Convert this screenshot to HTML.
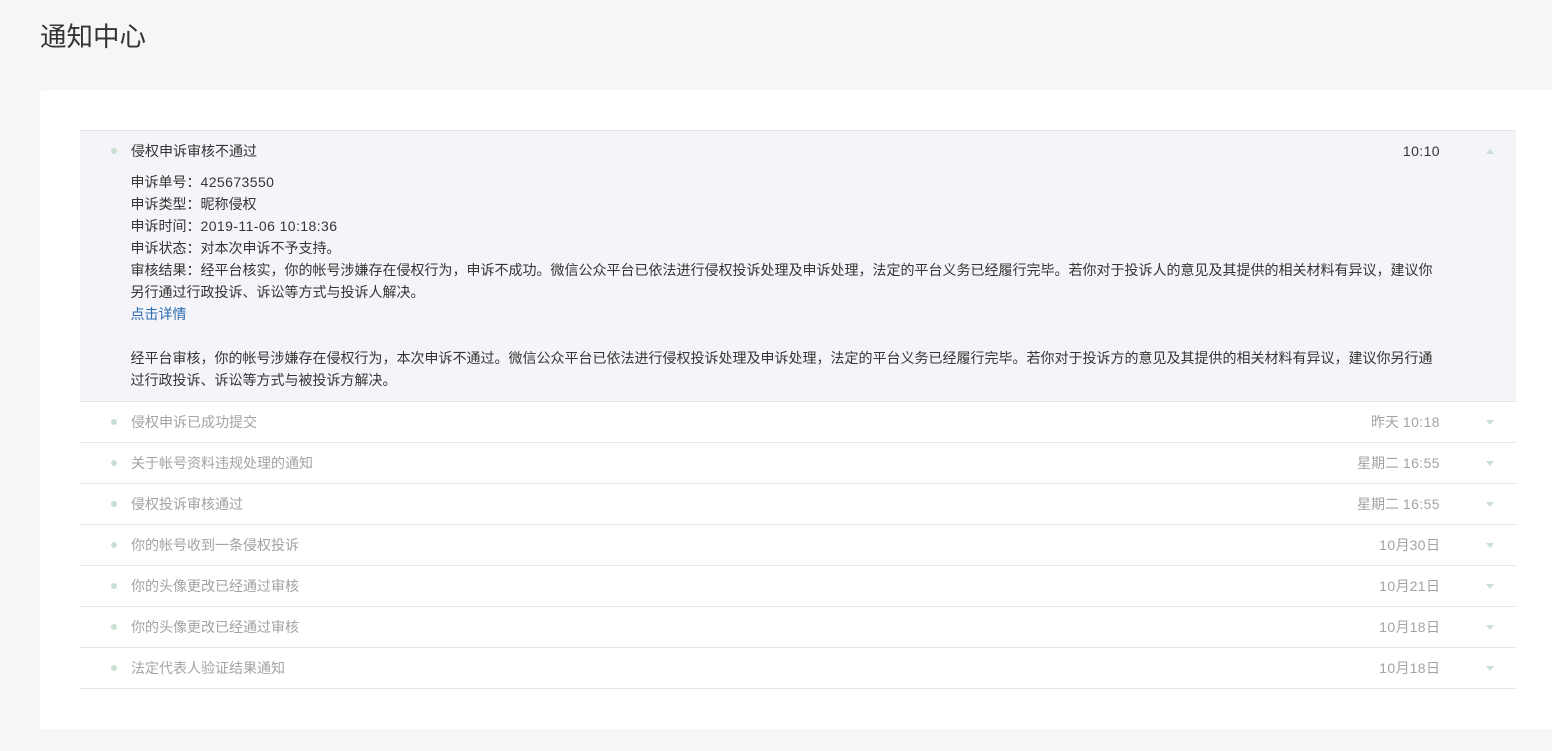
<!DOCTYPE html>
<html lang="zh">
<head>
<meta charset="utf-8">
<style>
html,body{margin:0;padding:0;width:1552px;height:751px;overflow:hidden;background:#f5f6f8;}
body{position:relative;font-family:"Liberation Sans","Noto Sans CJK SC",sans-serif;color:#353535;font-size:14px;}
.t{position:absolute;white-space:nowrap;line-height:22px;}
.d{left:130.5px;}
.h{position:absolute;left:40px;top:18px;font-size:26.5px;line-height:38px;color:#353535;white-space:nowrap;}
.card{position:absolute;left:40px;top:90px;width:1512px;height:639px;background:#fff;border-radius:4px 0 0 4px;}
.open{position:absolute;left:80px;top:130px;width:1436px;height:271px;background:#f4f4f9;}
.line{position:absolute;left:80px;width:1436px;height:1px;background:#e7e7eb;}
.dot{position:absolute;left:111px;width:6px;height:6px;border-radius:50%;background:#c9dfd2;}
.title{left:131px;}
.time{right:112px;text-align:right;}
.g{color:#a3a3a3;}
.num{letter-spacing:.42px;}
.arr{position:absolute;left:1486px;width:0;height:0;border-left:4.5px solid transparent;border-right:4.5px solid transparent;}
.up{border-bottom:5px solid #c9dfd2;}
.dn{border-top:5px solid #c9dfd2;}
a{color:#2a6cb0;text-decoration:none;}
</style>
</head>
<body>
<div class="h">通知中心</div>
<div class="card"></div>
<div class="open"></div>

<div class="line" style="top:130px"></div>
<div class="line" style="top:401px"></div>
<div class="line" style="top:442px"></div>
<div class="line" style="top:483px"></div>
<div class="line" style="top:524px"></div>
<div class="line" style="top:565px"></div>
<div class="line" style="top:606px"></div>
<div class="line" style="top:647px"></div>
<div class="line" style="top:688px"></div>

<div class="dot" style="top:148px"></div>
<div class="t title" style="top:140px">侵权申诉审核不通过</div>
<div class="t time num" style="top:140px">10:10</div>
<div class="arr up" style="top:149px"></div>

<div class="t d" style="top:171px">申诉单号：<span class="num">425673550</span></div>
<div class="t d" style="top:193px">申诉类型：昵称侵权</div>
<div class="t d" style="top:215px">申诉时间：<span class="num">2019-11-06 10:18:36</span></div>
<div class="t d" style="top:237px">申诉状态：对本次申诉不予支持。</div>
<div class="t d" style="top:259px">审核结果：经平台核实，你的帐号涉嫌存在侵权行为，申诉不成功。微信公众平台已依法进行侵权投诉处理及申诉处理，法定的平台义务已经履行完毕。若你对于投诉人的意见及其提供的相关材料有异议，建议你</div>
<div class="t d" style="top:281px">另行通过行政投诉、诉讼等方式与投诉人解决。</div>
<div class="t d" style="top:303px"><a>点击详情</a></div>
<div class="t d" style="top:347px">经平台审核，你的帐号涉嫌存在侵权行为，本次申诉不通过。微信公众平台已依法进行侵权投诉处理及申诉处理，法定的平台义务已经履行完毕。若你对于投诉方的意见及其提供的相关材料有异议，建议你另行通</div>
<div class="t d" style="top:369px">过行政投诉、诉讼等方式与被投诉方解决。</div>

<div class="dot" style="top:419px"></div>
<div class="t title g" style="top:411px">侵权申诉已成功提交</div>
<div class="t time g" style="top:411px">昨天 <span class="num">10:18</span></div>
<div class="arr dn" style="top:420px"></div>

<div class="dot" style="top:460px"></div>
<div class="t title g" style="top:452px">关于帐号资料违规处理的通知</div>
<div class="t time g" style="top:452px">星期二 <span class="num">16:55</span></div>
<div class="arr dn" style="top:461px"></div>

<div class="dot" style="top:501px"></div>
<div class="t title g" style="top:493px">侵权投诉审核通过</div>
<div class="t time g" style="top:493px">星期二 <span class="num">16:55</span></div>
<div class="arr dn" style="top:502px"></div>

<div class="dot" style="top:542px"></div>
<div class="t title g" style="top:534px">你的帐号收到一条侵权投诉</div>
<div class="t time g" style="top:534px"><span class="num">10</span>月<span class="num">30</span>日</div>
<div class="arr dn" style="top:543px"></div>

<div class="dot" style="top:583px"></div>
<div class="t title g" style="top:575px">你的头像更改已经通过审核</div>
<div class="t time g" style="top:575px"><span class="num">10</span>月<span class="num">21</span>日</div>
<div class="arr dn" style="top:584px"></div>

<div class="dot" style="top:624px"></div>
<div class="t title g" style="top:616px">你的头像更改已经通过审核</div>
<div class="t time g" style="top:616px"><span class="num">10</span>月<span class="num">18</span>日</div>
<div class="arr dn" style="top:625px"></div>

<div class="dot" style="top:665px"></div>
<div class="t title g" style="top:657px">法定代表人验证结果通知</div>
<div class="t time g" style="top:657px"><span class="num">10</span>月<span class="num">18</span>日</div>
<div class="arr dn" style="top:666px"></div>
</body>
</html>
